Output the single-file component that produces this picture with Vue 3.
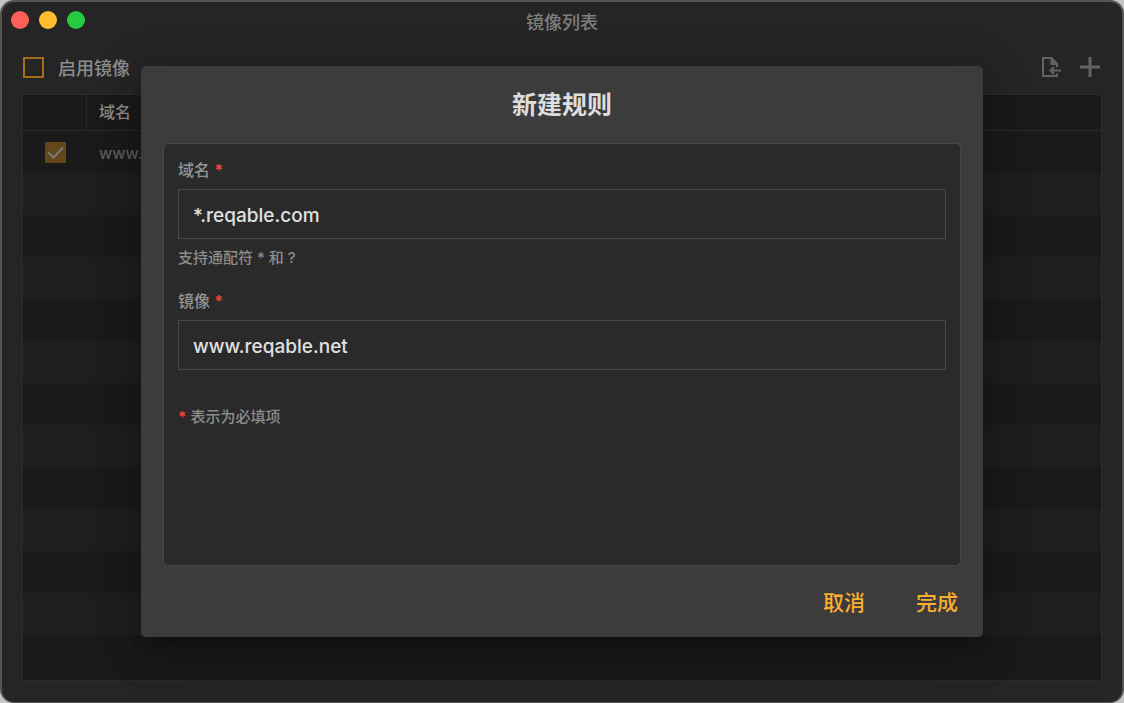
<script setup>
import { ref } from 'vue'

const enabled = ref(false)
const ruleOn = ref(true)
const domain = ref('*.reqable.com')
const mirror = ref('www.reqable.net')
const emptyRows = 12
</script>

<template>
  <div class="desktop">
    <main class="window">
      <header class="titlebar">
        <div class="lights">
          <button class="light red" type="button" aria-label="关闭"></button>
          <button class="light yellow" type="button" aria-label="最小化"></button>
          <button class="light green" type="button" aria-label="缩放"></button>
        </div>
        <h1>镜像列表</h1>
      </header>

      <div class="toolbar">
        <label class="enable">
          <input v-model="enabled" class="box" type="checkbox" />
          <span>启用镜像</span>
        </label>
        <div class="tools">
          <button type="button" aria-label="导入">
            <svg width="22" height="22" viewBox="0 0 22 22" fill="none" stroke="currentColor" stroke-width="2">
              <path d="M17 11V8L11.500 2H3V20H17V17.500" />
              <path d="M11 2V8.500H17" fill="currentColor" stroke-width="1" />
              <path d="M21 14.500H11M14 11L10.500 14.500L14 18" />
            </svg>
          </button>
          <button type="button" aria-label="添加">
            <svg width="22" height="22" viewBox="0 0 22 22" fill="none" stroke="currentColor" stroke-width="3">
              <path d="M1 11H21M11 1V21" />
            </svg>
          </button>
        </div>
      </div>

      <div class="grid">
        <table>
          <thead>
            <tr>
              <th class="check"></th>
              <th>域名</th>
            </tr>
          </thead>
          <tbody>
            <tr>
              <td class="check">
                <span class="tick">
                  <input v-model="ruleOn" type="checkbox" aria-label="启用规则" />
                  <svg v-if="ruleOn" width="21" height="21" viewBox="0 0 21 21" fill="none" stroke="currentColor" stroke-width="2">
                    <path d="M3 10L8.500 15.500L18 5.500" />
                  </svg>
                </span>
              </td>
              <td>www.</td>
            </tr>
            <tr v-for="n in emptyRows" :key="n">
              <td class="check"></td>
              <td></td>
            </tr>
          </tbody>
        </table>
      </div>

      <div class="overlay">
        <form class="dialog" role="dialog" aria-labelledby="dialog-title" @submit.prevent>
          <h2 id="dialog-title">新建规则</h2>
          <div class="panel">
            <label for="domain">域名 <b>*</b></label>
            <input id="domain" v-model="domain" type="text" />
            <p class="hint">支持通配符 * 和 ?</p>
            <label for="mirror">镜像 <b>*</b></label>
            <input id="mirror" v-model="mirror" type="text" />
            <p class="required"><b>*</b> 表示为必填项</p>
          </div>
          <footer>
            <button type="button">取消</button>
            <button type="submit">完成</button>
          </footer>
        </form>
      </div>
    </main>
  </div>
</template>

<style>
body {
  background: #c4c4c4;
}
</style>

<style scoped>
* {
  box-sizing: border-box;
}

.desktop {
  min-height: 100vh;
  display: flex;
  font-family: Inter, "Noto Sans CJK SC", sans-serif;
}

.window {
  position: relative;
  flex: 1;
  display: flex;
  flex-direction: column;
  padding: 0 20px 21px;
  background: #252525;
  border: 2px solid #555555;
  border-bottom-width: 1px;
  border-radius: 14px;
  overflow: hidden;
}

h1,
h2,
p {
  margin: 0;
}

button {
  padding: 0;
  border: 0;
  background: none;
  color: inherit;
  font: inherit;
}

svg {
  display: block;
}

.titlebar {
  position: relative;
  height: 42px;
}

.titlebar h1 {
  font-size: 18px;
  line-height: 42px;
  font-weight: 500;
  text-align: center;
  color: #7e7e7e;
}

.lights {
  position: absolute;
  top: 9px;
  left: -11px;
  display: flex;
  gap: 10px;
}

.light {
  width: 18px;
  height: 18px;
  border-radius: 50%;
}

.red {
  background: #ff5f57;
}

.yellow {
  background: #febc2e;
}

.green {
  background: #28c840;
}

.toolbar {
  display: flex;
  align-items: center;
  justify-content: space-between;
  height: 50px;
  padding: 0 1px 4px;
}

.enable {
  display: flex;
  align-items: center;
  gap: 14px;
  font-size: 18px;
  font-weight: 500;
  color: #8e8e8e;
}

.box {
  appearance: none;
  width: 21px;
  height: 21px;
  margin: 0;
  border: 2px solid #a36e16;
}

.tools {
  display: flex;
  gap: 17px;
  color: #626262;
}

.grid {
  flex: 1;
  background: #1a1a1a;
  border: 1px solid #2b2b2b;
}

table {
  width: 100%;
  border-collapse: separate;
  border-spacing: 0;
  table-layout: fixed;
}

th,
td {
  height: 42px;
  padding: 0 12px;
  text-align: left;
  font-size: 16px;
  line-height: 24px;
  font-weight: 500;
  color: #5c5c5c;
}

td {
  padding-top: 2px;
}

th {
  height: 36px;
  padding-bottom: 1px;
  border-bottom: 1px solid #2b2b2b;
  color: #8a8a8a;
}

.check {
  width: 64px;
}

th.check {
  border-right: 1px solid #2b2b2b;
}

td.check {
  padding: 0;
}

tbody tr:nth-child(even) {
  background: #1e1e1e;
}

.tick {
  position: relative;
  display: block;
  width: 21px;
  height: 21px;
  margin: 0 auto;
  color: #7a7a7a;
}

.tick input {
  appearance: none;
  display: block;
  width: 21px;
  height: 21px;
  margin: 0;
  background: #644718;
}

.tick svg {
  position: absolute;
  top: 0;
  left: 0;
  pointer-events: none;
}

.overlay {
  position: absolute;
  inset: 0;
  display: flex;
  padding: 64px 139px 65px;
}

.dialog {
  flex: 1;
  display: flex;
  flex-direction: column;
  padding: 0 22px;
  background: #3c3c3c;
  border-radius: 5px;
  box-shadow:
    0 11px 15px -7px rgba(0, 0, 0, 0.2),
    0 24px 38px 3px rgba(0, 0, 0, 0.14),
    0 9px 46px 8px rgba(0, 0, 0, 0.12);
}

.dialog h2 {
  padding-top: 2px;
  font-size: 25px;
  line-height: 75px;
  font-weight: 700;
  text-align: center;
  color: #dedede;
}

.panel {
  flex: 1;
  display: flex;
  flex-direction: column;
  padding: 14px;
  background: #2a2a2a;
  border: 1px solid #484848;
  border-radius: 5px;
}

.panel label {
  font-size: 16px;
  line-height: 24px;
  font-weight: 500;
  color: #949494;
}

.panel b {
  font-weight: 700;
  color: #f0443a;
}

.panel input {
  width: 100%;
  height: 50px;
  margin-top: 7px;
  padding: 2px 14px 0;
  background: transparent;
  border: 1px solid #4a4a4a;
  border-radius: 0;
  outline: none;
  font-family: inherit;
  font-size: 19px;
  font-weight: 500;
  color: #e0e0e0;
}

.hint,
.required {
  font-size: 15px;
  line-height: 22px;
  font-weight: 500;
  color: #8c8c8c;
}

.hint {
  margin: 8px 0 20px;
}

.required {
  margin-top: 36px;
}

footer {
  display: flex;
  justify-content: flex-end;
  gap: 51px;
  height: 71px;
  padding: 0 3px 2px;
}

footer button {
  font-size: 21px;
  font-weight: 500;
  color: #f9ae2e;
}
</style>
